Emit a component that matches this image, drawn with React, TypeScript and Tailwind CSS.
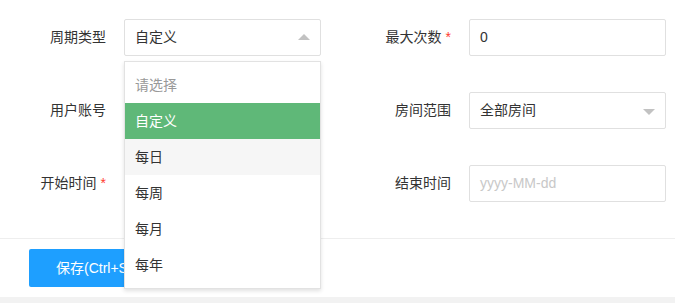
import React from "react";

const font = { fontFamily: '"Liberation Sans", "Noto Sans CJK SC", sans-serif' };

const Label = ({ text, required, w }: { text: string; required?: boolean; w: string }) => (
	<div className={`${w} shrink-0 text-right text-[14px] text-[#333] leading-[37px]`}>
		{text}
		{required && <span className="ml-[4px] text-[#ff3b30]">*</span>}
	</div>
);

const Caret = ({ up }: { up?: boolean }) => (
	<span
		className={`absolute right-[10px] top-1/2 h-0 w-0 border-x-[6px] border-x-transparent ${
			up ? "-mt-[4px] border-b-[6px] border-b-[#c2c2c2]" : "-mt-[2px] border-t-[6px] border-t-[#c2c2c2]"
		}`}
	/>
);

const Box = ({ children, caret, up }: { children?: React.ReactNode; caret?: boolean; up?: boolean }) => (
	<div className="relative h-[37px] w-[197px] shrink-0 rounded-[2px] border border-[#e0e0e0] bg-white pl-[10px] text-[14px] leading-[35px] text-[#333]">
		{children}
		{caret && <Caret up={up} />}
	</div>
);

const options = ["请选择", "自定义", "每日", "每周", "每月", "每年"];

export default function App() {
	return (
		<div className="relative h-[303px] w-[675px] overflow-hidden bg-[#f2f2f2]" style={font}>
			<div className="bg-white">
				<div className="flex flex-col gap-[36px] pt-[19px] pb-[36px]">
					<div className="flex items-center">
						<Label w="w-[106px]" text="周期类型" />
						<div className="ml-[18px] relative">
							<Box caret up>
								自定义
							</Box>
							<div className="absolute left-0 top-[42px] z-10 w-[197px] border border-[#e2e2e2] bg-white py-[5px] shadow-[0_2px_4px_rgba(0,0,0,0.12)]">
								{options.map((o, i) => (
									<div
										key={o}
										className={`h-[36px] pl-[10px] text-[14px] leading-[36px] ${
											i === 0
												? "text-[#999]"
												: i === 1
													? "bg-[#5fb878] text-white"
													: i === 2
														? "bg-[#f6f6f6] text-[#333]"
														: "text-[#333]"
										}`}
									>
										{o}
									</div>
								))}
							</div>
						</div>
						<Label w="w-[130px]" text="最大次数" required />
						<div className="ml-[18px]">
							<Box>0</Box>
						</div>
					</div>
					<div className="flex items-center">
						<Label w="w-[106px]" text="用户账号" />
						<div className="ml-[18px]">
							<Box />
						</div>
						<Label w="w-[130px]" text="房间范围" />
						<div className="ml-[18px]">
							<Box caret>全部房间</Box>
						</div>
					</div>
					<div className="flex items-center">
						<Label w="w-[106px]" text="开始时间" required />
						<div className="ml-[18px]">
							<Box />
						</div>
						<Label w="w-[130px]" text="结束时间" />
						<div className="ml-[18px]">
							<Box>
								<span className="text-[#c8c8c8]">yyyy-MM-dd</span>
							</Box>
						</div>
					</div>
				</div>
				<div className="border-t border-[#eeeeee] pt-[10px] pb-[10px] pl-[29px]">
					<button
						type="button"
						className="h-[38px] rounded-[2px] bg-[#1e9fff] px-[27px] text-[14px] text-white"
					>
						保存(Ctrl+S)
					</button>
				</div>
			</div>
		</div>
	);
}
